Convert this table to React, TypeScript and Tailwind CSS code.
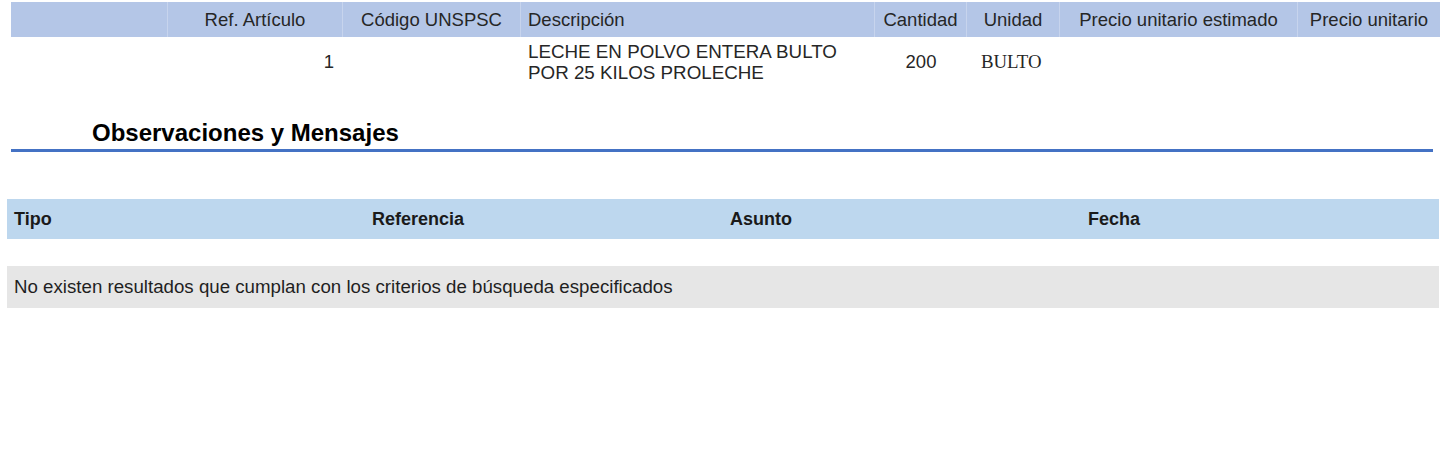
import React from "react";

const headCell = "flex h-full items-center justify-center border-r border-white/25 px-2 whitespace-nowrap";

export default function App() {
  return (
    <div
      className="h-[476px] w-[1440px] bg-white text-[18.5px] text-[#262626]"
      style={{ fontFamily: '"Liberation Sans", Arial, sans-serif' }}
    >
      {/* articulos */}
      <div className="pt-[2px] pl-[11px]">
        <div className="grid h-[35px] grid-cols-[157px_175px_178px_354px_92px_93px_238px_142px] bg-[#b4c6e7]">
          <div className="h-full border-r border-white/25" />
          <div className={headCell}>Ref. Artículo</div>
          <div className={headCell}>Código UNSPSC</div>
          <div className="flex h-full items-center border-r border-white/25 pl-[7px]">Descripción</div>
          <div className={headCell}>Cantidad</div>
          <div className={headCell}>Unidad</div>
          <div className={headCell}>Precio unitario estimado</div>
          <div className="flex h-full items-center justify-center whitespace-nowrap">Precio unitario</div>
        </div>
        <div className="grid h-[50px] grid-cols-[157px_175px_178px_354px_92px_93px_238px_142px] items-center">
          <div />
          <div className="pr-[9px] text-right">1</div>
          <div />
          <div className="pl-[7px] text-[18.8px] leading-[21px]">
            LECHE EN POLVO ENTERA BULTO
            <br />
            POR 25 KILOS PROLECHE
          </div>
          <div className="text-center">200</div>
          <div className="pl-[14px] font-['Liberation_Serif',serif] text-[18.8px]">BULTO</div>
          <div />
          <div />
        </div>
      </div>

      {/* observaciones */}
      <div className="mt-[32px] ml-[11px] w-[1422px]">
        <h2 className="pl-[81px] text-[24px] leading-[28px] font-bold text-black">Observaciones y Mensajes</h2>
        <div className="mt-[2px] h-[3px] bg-[#4472c4]" />
      </div>

      <div className="mt-[47px] ml-[7px] w-[1432px]">
        <div className="grid h-[40px] grid-cols-4 items-center bg-[#bdd7ee] text-[18px] font-bold text-[#1a1a1a]">
          <div className="pl-[7px]">Tipo</div>
          <div className="pl-[7px]">Referencia</div>
          <div className="pl-[7px]">Asunto</div>
          <div className="pl-[7px]">Fecha</div>
        </div>
        <div className="h-[27px]" />
        <div className="flex h-[42px] items-center bg-[#e6e6e6] pl-[7px] text-[18.7px] text-[#1f1f1f]">
          No existen resultados que cumplan con los criterios de búsqueda especificados
        </div>
      </div>
    </div>
  );
}
